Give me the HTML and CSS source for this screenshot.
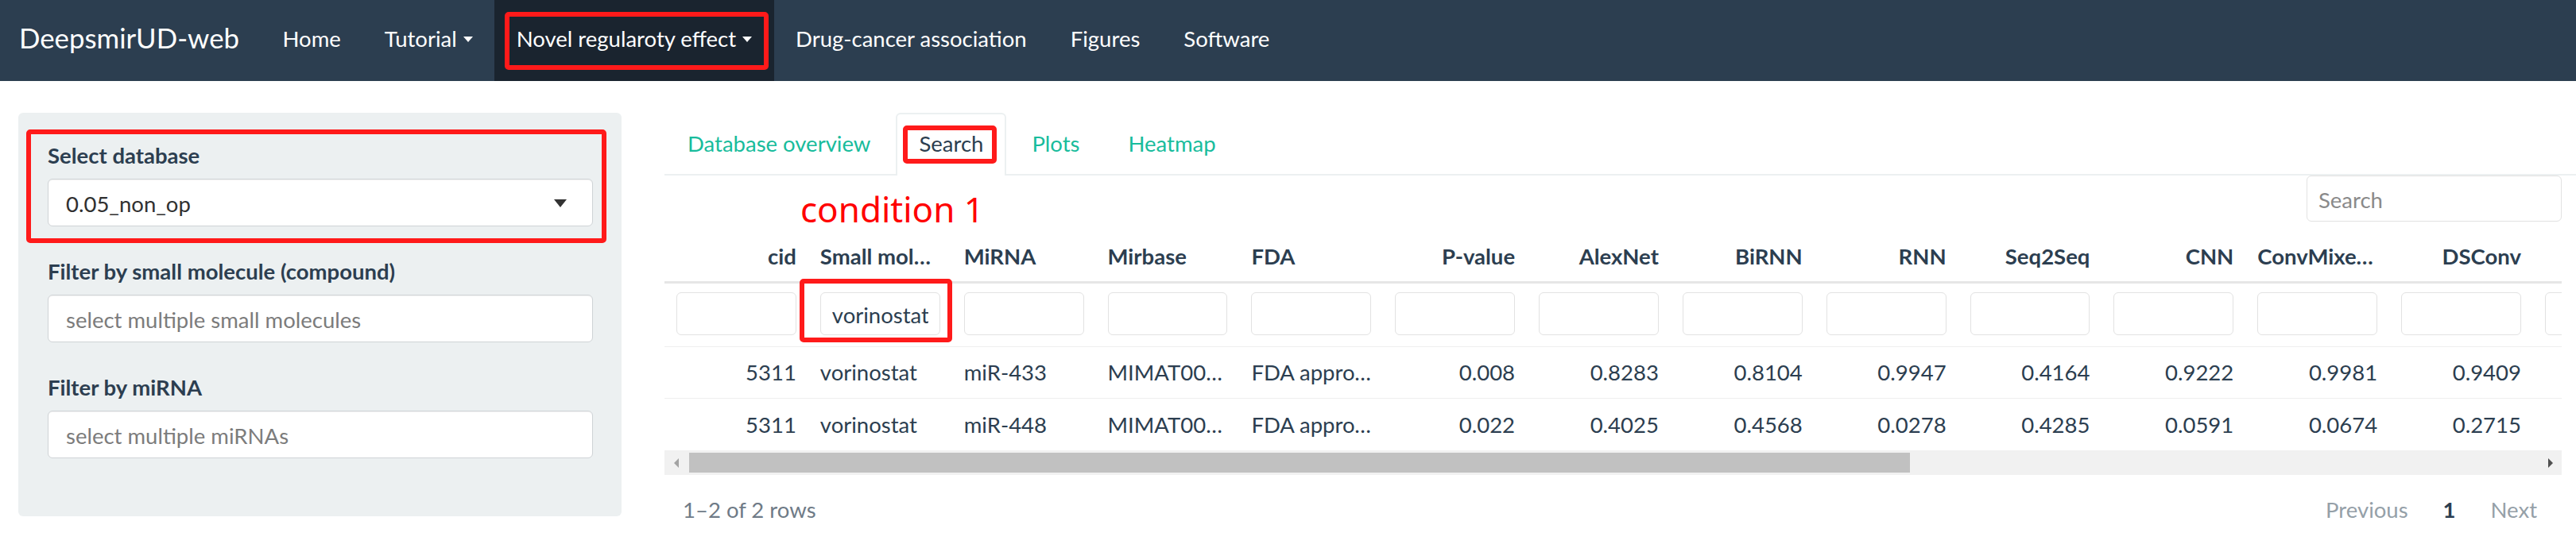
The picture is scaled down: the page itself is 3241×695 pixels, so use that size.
FILE: index.html
```html
<!DOCTYPE html>
<html lang="en">
<head>
<meta charset="utf-8">
<title>DeepsmirUD-web</title>
<link rel="stylesheet" href="styles.css">
</head>
<body>
<nav class="navbar">
  <span class="brand">DeepsmirUD-web</span>
  <ul class="nav">
    <li><a>Home</a></li>
    <li><a>Tutorial<span class="caret"></span></a></li>
    <li class="active"><a>Novel regularoty effect<span class="caret"></span></a><span class="mark mark-nav"></span></li>
    <li><a>Drug-cancer association</a></li>
    <li><a>Figures</a></li>
    <li><a>Software</a></li>
  </ul>
</nav>

<div class="page">
  <aside class="well">
    <div class="form-group">
      <label>Select database</label>
      <div class="select"><span>0.05_non_op</span><span class="sel-caret"></span></div>
      <span class="mark mark-db"></span>
    </div>
    <div class="form-group">
      <label>Filter by small molecule (compound)</label>
      <input class="sinput" placeholder="select multiple small molecules">
    </div>
    <div class="form-group">
      <label>Filter by miRNA</label>
      <input class="sinput" placeholder="select multiple miRNAs">
    </div>
  </aside>

  <main class="main">
    <ul class="tabs">
      <li><a>Database overview</a></li>
      <li class="active"><a>Search</a><span class="mark mark-tab"></span></li>
      <li><a>Plots</a></li>
      <li><a>Heatmap</a></li>
    </ul>
    <div class="tab-content">
      <div class="annot-text">condition 1</div>
      <div class="search-row"><input class="search" placeholder="Search"></div>
      <div class="table-wrap">
        <table>
          <thead>
            <tr class="hdr">
              <th class="num">cid</th>
              <th>Small molecule</th>
              <th>MiRNA</th>
              <th>Mirbase</th>
              <th>FDA</th>
              <th class="num">P-value</th>
              <th class="num">AlexNet</th>
              <th class="num">BiRNN</th>
              <th class="num">RNN</th>
              <th class="num">Seq2Seq</th>
              <th class="num">CNN</th>
              <th>ConvMixer64</th>
              <th class="num">DSConv</th>
              <th class="num"></th>
            </tr>
            <tr class="filters">
              <td><input class="finput"></td>
              <td class="marked"><input class="finput" value="vorinostat"><span class="mark mark-filter"></span></td>
              <td><input class="finput"></td>
              <td><input class="finput"></td>
              <td><input class="finput"></td>
              <td><input class="finput"></td>
              <td><input class="finput"></td>
              <td><input class="finput"></td>
              <td><input class="finput"></td>
              <td><input class="finput"></td>
              <td><input class="finput"></td>
              <td><input class="finput"></td>
              <td><input class="finput"></td>
              <td><input class="finput"></td>
            </tr>
          </thead>
          <tbody>
            <tr>
              <td class="num">5311</td>
              <td>vorinostat</td>
              <td>miR-433</td>
              <td>MIMAT0001627</td>
              <td>FDA approved</td>
              <td class="num">0.008</td>
              <td class="num">0.8283</td>
              <td class="num">0.8104</td>
              <td class="num">0.9947</td>
              <td class="num">0.4164</td>
              <td class="num">0.9222</td>
              <td class="num">0.9981</td>
              <td class="num">0.9409</td>
              <td class="num"></td>
            </tr>
            <tr>
              <td class="num">5311</td>
              <td>vorinostat</td>
              <td>miR-448</td>
              <td>MIMAT0001532</td>
              <td>FDA approved</td>
              <td class="num">0.022</td>
              <td class="num">0.4025</td>
              <td class="num">0.4568</td>
              <td class="num">0.0278</td>
              <td class="num">0.4285</td>
              <td class="num">0.0591</td>
              <td class="num">0.0674</td>
              <td class="num">0.2715</td>
              <td class="num"></td>
            </tr>
          </tbody>
        </table>
      </div>
      <div class="hscroll">
        <span class="sb-btn"><span class="arr-l"></span></span>
        <span class="sb-thumb"></span>
        <span class="sb-fill"></span>
        <span class="sb-btn"><span class="arr-r"></span></span>
      </div>
      <div class="footer">
        <span class="info">1–2 of 2 rows</span>
        <div class="pager">
          <span class="pg">Previous</span>
          <span class="pg cur">1</span>
          <span class="pg">Next</span>
        </div>
      </div>
    </div>
  </main>
</div>
</body>
</html>
```

FILE: styles.css
```css
* { box-sizing: border-box; }
html, body { margin: 0; padding: 0; }
body {
  font-family: Lato, "Noto Sans", sans-serif;
  font-size: 27.5px;
  color: #2c3e50;
  background: #fff;
  width: 3241px;
  height: 695px;
  overflow: hidden;
}

/* annotations drawn over the UI */
.mark {
  position: absolute;
  border: 6px solid #ff1a1a;
  border-radius: 5px;
  pointer-events: none;
}

/* navbar */
.navbar {
  display: flex;
  height: 102px;
  background: #2c3e50;
}
.brand {
  display: flex;
  align-items: center;
  padding: 0 27px 8px 24px;
  font-size: 34.8px;
  color: #fff;
}
.nav {
  display: flex;
  list-style: none;
  margin: 0;
  padding: 0;
}
.nav li { position: relative; display: flex; }
.nav li.active { background: #1a242f; }
.nav a {
  display: flex;
  align-items: center;
  padding: 0 27.5px 6px;
  color: #fff;
}
.caret {
  display: inline-block;
  width: 0;
  height: 0;
  margin-left: 8px;
  margin-top: 3px;
  border-top: 7px solid #fff;
  border-left: 6px solid transparent;
  border-right: 6px solid transparent;
}
.mark-nav { left: 13px; right: 7px; top: 15px; bottom: 14px; }

/* layout */
.page {
  display: flex;
  align-items: flex-start;
  gap: 54px;
  padding: 40px 0 0 23px;
}

/* sidebar */
.well {
  flex: 0 0 759px;
  background: #ecf0f1;
  border-radius: 6px;
  padding: 34px 36px 36px 37px;
}
.form-group { position: relative; margin-bottom: 37px; }
.form-group label {
  display: block;
  font-weight: 700;
  line-height: 40px;
  margin-bottom: 9px;
}
.select, .sinput {
  display: flex;
  align-items: center;
  width: 100%;
  height: 60px;
  background: #fff;
  border: 1px solid #cfd3d6;
  border-radius: 6px;
  box-shadow: inset 0 1px 1px rgba(0, 0, 0, 0.06);
}
.select {
  justify-content: space-between;
  padding: 2px 32px 0 22px;
  color: #303030;
}
.sel-caret {
  width: 0;
  height: 0;
  border-top: 10px solid #333;
  border-left: 8.5px solid transparent;
  border-right: 8.5px solid transparent;
}
.sinput {
  font: inherit;
  color: #303030;
  padding: 2px 22px 0;
  outline: none;
}
.sinput::placeholder { color: #7c7c7c; }
.mark-db { left: -27px; right: -17px; top: -13px; bottom: -21px; }

/* main panel */
.main { flex: 1; min-width: 0; }
.tabs {
  display: flex;
  list-style: none;
  margin: 0;
  padding: 0;
  border-bottom: 2px solid #ecf0f1;
}
.tabs li { position: relative; margin-right: 3px; margin-bottom: -2px; }
.tabs a {
  display: flex;
  align-items: center;
  height: 79px;
  padding: 0 27px 4px;
  border: 2px solid transparent;
  border-bottom: 0;
  border-radius: 6px 6px 0 0;
  color: #18bc9c;
}
.tabs li.active a {
  border-color: #ecf0f1;
  background: #fff;
  color: #2c3e50;
}
.mark-tab { left: 9px; right: 12px; top: 16px; bottom: 15px; }

.tab-content { position: relative; padding-right: 18px; }
.annot-text {
  position: absolute;
  left: 171px;
  top: 20px;
  font-family: "Noto Sans", "Noto Sans CJK SC", sans-serif;
  font-size: 44px;
  line-height: 44px;
  color: #ff0000;
}
.search-row {
  display: flex;
  justify-content: flex-end;
  margin-bottom: 13px;
}
.search, .finput {
  font: inherit;
  color: #2c3e50;
  background: #fff;
  border: 1px solid #e2e2e2;
  border-radius: 6px;
  outline: none;
}
.search {
  width: 321px;
  height: 58px;
  padding: 2px 14px 0;
}
.search::placeholder { color: #8a8a8a; }

.table-wrap { overflow: hidden; }
table {
  border-collapse: separate;
  border-spacing: 0;
  table-layout: fixed;
  width: 2532px;
}
th, td {
  width: 150.85px;
  padding: 0 15px;
  text-align: left;
}
.hdr th {
  font-weight: 700;
  line-height: 62px;
  height: 62px;
  border-bottom: 3px solid #e6e6e6;
  overflow: hidden;
  text-overflow: ellipsis;
  white-space: nowrap;
}
.num { text-align: right; }
.filters td {
  padding: 11px 15px 14px;
  border-bottom: 1px solid #efefef;
}
.filters td.marked { position: relative; }
.finput {
  display: block;
  width: 100%;
  height: 54px;
  padding: 2px 14px 0;
}
.mark-filter { left: -11px; right: 0; top: -6px; bottom: 5px; }

tbody td {
  line-height: 64px;
  border-bottom: 1px solid #efefef;
  overflow: hidden;
  text-overflow: ellipsis;
  white-space: nowrap;
}
tbody tr:last-child td { border-bottom: 0; line-height: 65px; }

/* horizontal scrollbar */
.hscroll {
  display: flex;
  height: 31px;
  background: #f1f1f1;
}
.sb-btn {
  flex: 0 0 31px;
  display: flex;
  align-items: center;
  justify-content: center;
}
.sb-thumb {
  flex: 0 0 1536px;
  margin: 3px 0;
  background: #c1c1c1;
}
.sb-fill { flex: 1; }
.arr-l {
  width: 0;
  height: 0;
  border-right: 6px solid #a3a3a3;
  border-top: 6px solid transparent;
  border-bottom: 6px solid transparent;
  margin-left: -2px;
}
.arr-r {
  width: 0;
  height: 0;
  border-left: 6px solid #505050;
  border-top: 6px solid transparent;
  border-bottom: 6px solid transparent;
  margin-left: 2px;
}

/* footer / pagination */
.footer {
  display: flex;
  align-items: center;
  justify-content: space-between;
  height: 86px;
  padding: 0 9px 0 23px;
}
.info { color: #6f7b87; }
.pager { display: flex; }
.pg { padding: 0 22px; color: #95a0a8; }
.pg.cur { color: #2c3e50; font-weight: 700; }
```
